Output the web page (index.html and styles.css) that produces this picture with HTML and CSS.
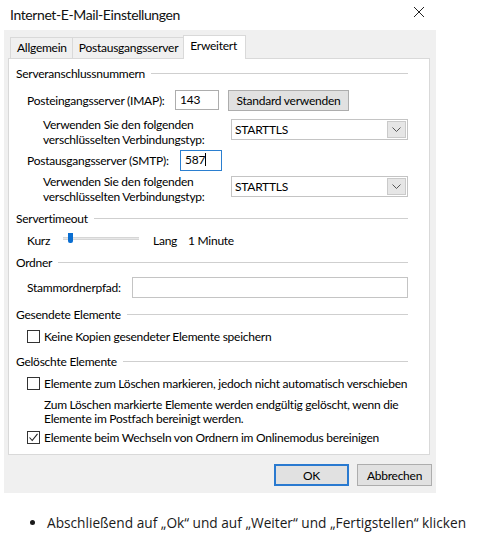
FILE: index.html
```html
<!DOCTYPE html>
<html lang="de">
<head>
<meta charset="utf-8">
<title>Internet-E-Mail-Einstellungen</title>
<link rel="stylesheet" href="styles.css">
</head>
<body>
<div class="dialog">
  <div class="titlebar">
    <span class="title">Internet-E-Mail-Einstellungen</span>
    <svg class="close" width="12" height="12" viewBox="0 0 12 12"><path d="M1 1 L11 11 M11 1 L1 11" stroke="#222" stroke-width="1" fill="none"/></svg>
  </div>
  <div class="client">
    <div class="tabs">
      <div class="tab">Allgemein</div>
      <div class="tab">Postausgangsserver</div>
      <div class="tab active">Erweitert</div>
    </div>
    <div class="panel">
      <div class="group">Serveranschlussnummern</div>
      <div class="row r-imap">
        <span class="label lw1">Posteingangsserver (IMAP):</span>
        <span class="input port">143</span>
        <span class="btn std">Standard verwenden</span>
      </div>
      <div class="row r-enc">
        <span class="enc-label">Verwenden Sie den folgenden<br>verschlüsselten Verbindungstyp:</span>
        <span class="select"><span class="sel-text">STARTTLS</span><span class="arrow"><svg width="9" height="6" viewBox="0 0 9 6"><path d="M0.5 0.5 L4.5 4.5 L8.5 0.5" stroke="#555" stroke-width="1" fill="none"/></svg></span></span>
      </div>
      <div class="row r-smtp">
        <span class="label lw2">Postausgangsserver (SMTP):</span>
        <span class="input port focus">587<span class="caret"></span></span>
      </div>
      <div class="row r-enc r-enc2">
        <span class="enc-label">Verwenden Sie den folgenden<br>verschlüsselten Verbindungstyp:</span>
        <span class="select"><span class="sel-text">STARTTLS</span><span class="arrow"><svg width="9" height="6" viewBox="0 0 9 6"><path d="M0.5 0.5 L4.5 4.5 L8.5 0.5" stroke="#555" stroke-width="1" fill="none"/></svg></span></span>
      </div>
      <div class="group g-timeout">Servertimeout</div>
      <div class="row r-slider">
        <span class="kurz">Kurz</span>
        <span class="track"><span class="thumb"></span></span>
        <span class="lang">Lang</span>
        <span>1 Minute</span>
      </div>
      <div class="group g-ordner">Ordner</div>
      <div class="row r-path">
        <span class="label lw3">Stammordnerpfad:</span>
        <span class="input path"></span>
      </div>
      <div class="group g-sent">Gesendete Elemente</div>
      <div class="row r-check">
        <span class="box"></span>
        <span>Keine Kopien gesendeter Elemente speichern</span>
      </div>
      <div class="group g-del">Gelöschte Elemente</div>
      <div class="row r-check r-check2">
        <span class="box"></span>
        <span>Elemente zum Löschen markieren, jedoch nicht automatisch verschieben</span>
      </div>
      <div class="info">Zum Löschen markierte Elemente werden endgültig gelöscht, wenn die<br>Elemente im Postfach bereinigt werden.</div>
      <div class="row r-check r-check3">
        <span class="box"><svg width="11" height="11" viewBox="0 0 11 11"><path d="M1.5 5.5 L4.2 8.5 L9.5 1.8" stroke="#222" stroke-width="1.1" fill="none"/></svg></span>
        <span>Elemente beim Wechseln von Ordnern im Onlinemodus bereinigen</span>
      </div>
    </div>
    <div class="buttons">
      <span class="btn dlg default">OK</span>
      <span class="btn dlg">Abbrechen</span>
    </div>
  </div>
</div>
<ul class="steps">
  <li>Abschließend auf „Ok“ und auf „Weiter“ und „Fertigstellen“ klicken</li>
</ul>
</body>
</html>
```

FILE: styles.css
```css
* { box-sizing: border-box; }
body {
  margin: 0;
  background: #fff;
  font-family: Lato, "Noto Sans", sans-serif;
  color: #000;
}
.dialog {
  width: 440px;
}
.titlebar {
  height: 30px;
  display: flex;
  align-items: center;
  justify-content: space-between;
  padding: 0 15px 2px 10px;
  background: #fff;
}
.title {
  font-size: 14px;
  letter-spacing: -0.4px;
  color: #111;
}
.close { display: block; margin-top: -4px; }
.client {
  margin-left: 4px;
  width: 432px;
  height: 463px;
  background: #f0f0f0;
  padding-top: 5px;
  letter-spacing: -0.25px;
}
.tabs {
  display: flex;
  align-items: flex-end;
  height: 23px;
  padding-left: 6px;
  font-size: 12px;
}
.tab {
  height: 21px;
  line-height: 19px;
  padding: 0 5px 0 6px;
  border: 1px solid #d9d9d9;
  border-bottom: none;
  background: #f0f0f0;
  margin-right: -1px;
}
.tab.active {
  height: 24px;
  line-height: 20px;
  background: #fff;
  position: relative;
  z-index: 1;
  margin-bottom: -1px;
  padding: 0 8px 0 6px;
}
.panel {
  margin-left: 4px;
  width: 422px;
  height: 397px;
  background: #fff;
  border: 1px solid #d9d9d9;
  padding: 7px 21px 0 7px;
  font-size: 12px;
}
.group {
  display: flex;
  align-items: center;
  height: 16px;
  line-height: 16px;
  white-space: nowrap;
}
.group::after {
  content: "";
  flex: 1;
  height: 1px;
  background: #cfcfcf;
  margin-left: 6px;
  margin-top: -1px;
}
.row {
  display: flex;
  align-items: center;
  padding-left: 11px;
  white-space: nowrap;
}
.label { display: inline-block; flex-shrink: 0; }
.lw1 { width: 148px; }
.lw2 { width: 153px; }
.lw3 { width: 105px; }
.r-imap { height: 22px; margin-top: 7px; }
.input {
  display: inline-block;
  flex-shrink: 0;
  height: 20px;
  line-height: 18px;
  border: 1px solid #adadad;
  background: #fff;
  padding-left: 4px;
}
.port { width: 44px; }
.focus {
  border-color: #2b7fd0;
  width: 42px;
  height: 21px;
}
.caret {
  display: inline-block;
  width: 1px;
  height: 13px;
  background: #000;
  vertical-align: -2px;
}
.btn {
  display: inline-flex;
  align-items: center;
  justify-content: center;
  background: #e1e1e1;
  border: 1px solid #adadad;
  color: #000;
}
.std {
  margin-left: 9px;
  width: 121px;
  height: 21px;
}
.r-enc {
  height: 30px;
  margin-top: 6px;
  align-items: flex-start;
  padding-left: 27px;
}
.enc-label {
  width: 188px;
  flex-shrink: 0;
  line-height: 15px;
}
.select {
  margin-top: 2px;
  width: 177px;
  height: 21px;
  border: 1px solid #c4c4c4;
  background: #fff;
  display: flex;
  align-items: center;
  justify-content: space-between;
  padding: 1px 1px 1px 3px;
}
.sel-text { line-height: 17px; }
.arrow {
  width: 19px;
  height: 17px;
  background: #e6e6e6;
  border: 1px solid #cacaca;
  display: flex;
  align-items: center;
  justify-content: center;
}
.r-smtp { height: 22px; margin-top: 2px; }
.r-enc2 { margin-top: 3px; }
.g-timeout { margin-top: 7px; }
.r-slider { height: 16px; margin-top: 5px; }
.kurz { width: 36px; }
.track {
  position: relative;
  width: 76px;
  height: 3px;
  background: #e7e7e7;
  border: 1px solid #d6d6d6;
  border-width: 1px 0;
  margin-top: -4px;
}
.thumb {
  position: absolute;
  left: 5px;
  top: -5px;
  width: 5px;
  height: 10px;
  background: #0a6ed1;
  border-radius: 0 0 2px 2px;
}
.lang { margin-left: 14px; width: 35px; }
.g-ordner { margin-top: 7px; }
.r-path { height: 22px; margin-top: 5px; }
.path { width: 276px; height: 21px; border-color: #c4c4c4; }
.g-sent { margin-top: 9px; }
.r-check { height: 16px; margin-top: 5px; }
.box {
  flex-shrink: 0;
  width: 13px;
  height: 13px;
  border: 1px solid #333;
  background: #fff;
  margin-right: 4px;
  display: inline-flex;
  align-items: center;
  justify-content: center;
}
.g-del { margin-top: 10px; }
.info {
  margin-top: 7px;
  padding-left: 28px;
  line-height: 14px;
  white-space: nowrap;
}
.r-check3 { margin-top: 3px; }
.buttons {
  display: flex;
  justify-content: flex-end;
  gap: 8px;
  padding-right: 4px;
  margin-top: 9px;
  font-size: 12px;
}
.dlg {
  width: 75px;
  height: 22px;
}
.default {
  border: 2px solid #2a7ad0;
}
.steps {
  margin: 20px 0 0 0;
  padding-left: 47px;
  font-family: "Open Sans", "Noto Sans", sans-serif;
  font-size: 13.7px;
  color: #1a1a1a;
}
.steps li { line-height: 20px; }
```
